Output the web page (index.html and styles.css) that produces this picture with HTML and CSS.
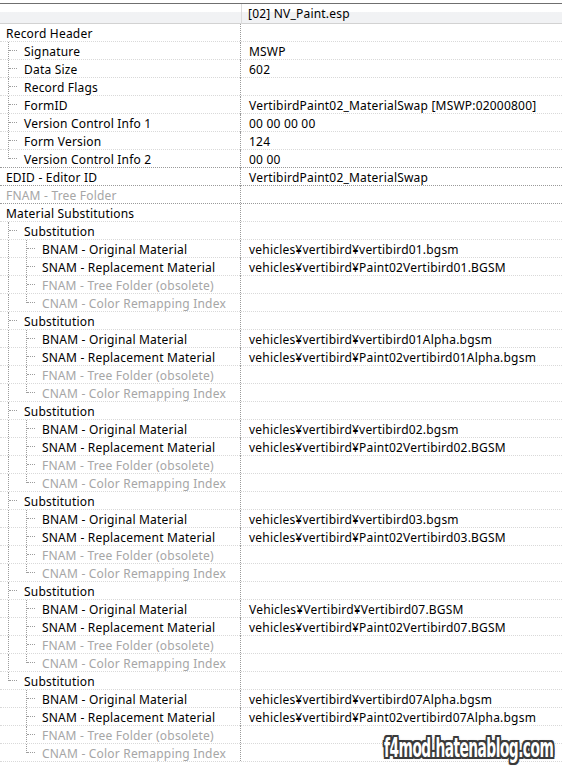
FILE: index.html
```html
<!DOCTYPE html>
<html lang="ja">
<head>
  <meta charset="UTF-8">
  <title>NV_Paint.esp - MSWP</title>
  <link rel="stylesheet" href="styles.css">
</head>
<body>
  <div class="view">
    <div class="head">
      <div class="hcell"></div>
      <div class="hcell file">[02] NV_Paint.esp</div>
    </div>

    <div class="tree">
      <div class="row"><div class="name"><span class="t">Record Header</span></div><div class="val"></div></div>
      <div class="row"><div class="name"><i class="g tee"></i><span class="t">Signature</span></div><div class="val">MSWP</div></div>
      <div class="row"><div class="name"><i class="g tee"></i><span class="t">Data Size</span></div><div class="val">602</div></div>
      <div class="row"><div class="name"><i class="g tee"></i><span class="t">Record Flags</span></div><div class="val"></div></div>
      <div class="row"><div class="name"><i class="g tee"></i><span class="t">FormID</span></div><div class="val">VertibirdPaint02_MaterialSwap [MSWP:02000800]</div></div>
      <div class="row"><div class="name"><i class="g tee"></i><span class="t">Version Control Info 1</span></div><div class="val">00 00 00 00</div></div>
      <div class="row"><div class="name"><i class="g tee"></i><span class="t">Form Version</span></div><div class="val">124</div></div>
      <div class="row top"><div class="name"><i class="g end"></i><span class="t">Version Control Info 2</span></div><div class="val">00 00</div></div>
      <div class="row top"><div class="name"><span class="t">EDID - Editor ID</span></div><div class="val">VertibirdPaint02_MaterialSwap</div></div>
      <div class="row top"><div class="name off"><span class="t">FNAM - Tree Folder</span></div><div class="val"></div></div>
      <div class="row"><div class="name"><span class="t">Material Substitutions</span></div><div class="val"></div></div>

      <!-- substitution 1 -->
      <div class="row"><div class="name"><i class="g tee"></i><span class="t">Substitution</span></div><div class="val"></div></div>
      <div class="row"><div class="name"><i class="g pipe"></i><i class="g tee"></i><span class="t">BNAM - Original Material</span></div><div class="val">vehicles¥vertibird¥vertibird01.bgsm</div></div>
      <div class="row"><div class="name"><i class="g pipe"></i><i class="g tee"></i><span class="t">SNAM - Replacement Material</span></div><div class="val">vehicles¥vertibird¥Paint02Vertibird01.BGSM</div></div>
      <div class="row"><div class="name off"><i class="g pipe"></i><i class="g tee"></i><span class="t">FNAM - Tree Folder (obsolete)</span></div><div class="val"></div></div>
      <div class="row"><div class="name off"><i class="g pipe"></i><i class="g end"></i><span class="t">CNAM - Color Remapping Index</span></div><div class="val"></div></div>

      <!-- substitution 2 -->
      <div class="row"><div class="name"><i class="g tee"></i><span class="t">Substitution</span></div><div class="val"></div></div>
      <div class="row"><div class="name"><i class="g pipe"></i><i class="g tee"></i><span class="t">BNAM - Original Material</span></div><div class="val">vehicles¥vertibird¥vertibird01Alpha.bgsm</div></div>
      <div class="row"><div class="name"><i class="g pipe"></i><i class="g tee"></i><span class="t">SNAM - Replacement Material</span></div><div class="val">vehicles¥vertibird¥Paint02vertibird01Alpha.bgsm</div></div>
      <div class="row"><div class="name off"><i class="g pipe"></i><i class="g tee"></i><span class="t">FNAM - Tree Folder (obsolete)</span></div><div class="val"></div></div>
      <div class="row"><div class="name off"><i class="g pipe"></i><i class="g end"></i><span class="t">CNAM - Color Remapping Index</span></div><div class="val"></div></div>

      <!-- substitution 3 -->
      <div class="row"><div class="name"><i class="g tee"></i><span class="t">Substitution</span></div><div class="val"></div></div>
      <div class="row"><div class="name"><i class="g pipe"></i><i class="g tee"></i><span class="t">BNAM - Original Material</span></div><div class="val">vehicles¥vertibird¥vertibird02.bgsm</div></div>
      <div class="row"><div class="name"><i class="g pipe"></i><i class="g tee"></i><span class="t">SNAM - Replacement Material</span></div><div class="val">vehicles¥vertibird¥Paint02Vertibird02.BGSM</div></div>
      <div class="row"><div class="name off"><i class="g pipe"></i><i class="g tee"></i><span class="t">FNAM - Tree Folder (obsolete)</span></div><div class="val"></div></div>
      <div class="row"><div class="name off"><i class="g pipe"></i><i class="g end"></i><span class="t">CNAM - Color Remapping Index</span></div><div class="val"></div></div>

      <!-- substitution 4 -->
      <div class="row"><div class="name"><i class="g tee"></i><span class="t">Substitution</span></div><div class="val"></div></div>
      <div class="row"><div class="name"><i class="g pipe"></i><i class="g tee"></i><span class="t">BNAM - Original Material</span></div><div class="val">vehicles¥vertibird¥vertibird03.bgsm</div></div>
      <div class="row"><div class="name"><i class="g pipe"></i><i class="g tee"></i><span class="t">SNAM - Replacement Material</span></div><div class="val">vehicles¥vertibird¥Paint02Vertibird03.BGSM</div></div>
      <div class="row"><div class="name off"><i class="g pipe"></i><i class="g tee"></i><span class="t">FNAM - Tree Folder (obsolete)</span></div><div class="val"></div></div>
      <div class="row"><div class="name off"><i class="g pipe"></i><i class="g end"></i><span class="t">CNAM - Color Remapping Index</span></div><div class="val"></div></div>

      <!-- substitution 5 -->
      <div class="row"><div class="name"><i class="g tee"></i><span class="t">Substitution</span></div><div class="val"></div></div>
      <div class="row"><div class="name"><i class="g pipe"></i><i class="g tee"></i><span class="t">BNAM - Original Material</span></div><div class="val">Vehicles¥Vertibird¥Vertibird07.BGSM</div></div>
      <div class="row"><div class="name"><i class="g pipe"></i><i class="g tee"></i><span class="t">SNAM - Replacement Material</span></div><div class="val">vehicles¥vertibird¥Paint02Vertibird07.BGSM</div></div>
      <div class="row"><div class="name off"><i class="g pipe"></i><i class="g tee"></i><span class="t">FNAM - Tree Folder (obsolete)</span></div><div class="val"></div></div>
      <div class="row"><div class="name off"><i class="g pipe"></i><i class="g end"></i><span class="t">CNAM - Color Remapping Index</span></div><div class="val"></div></div>

      <!-- substitution 6 (last) -->
      <div class="row"><div class="name"><i class="g end"></i><span class="t">Substitution</span></div><div class="val"></div></div>
      <div class="row"><div class="name"><i class="g"></i><i class="g tee"></i><span class="t">BNAM - Original Material</span></div><div class="val">vehicles¥vertibird¥vertibird07Alpha.bgsm</div></div>
      <div class="row"><div class="name"><i class="g"></i><i class="g tee"></i><span class="t">SNAM - Replacement Material</span></div><div class="val">vehicles¥vertibird¥Paint02vertibird07Alpha.bgsm</div></div>
      <div class="row"><div class="name off"><i class="g"></i><i class="g tee"></i><span class="t">FNAM - Tree Folder (obsolete)</span></div><div class="val"></div></div>
      <div class="row"><div class="name off"><i class="g"></i><i class="g end"></i><span class="t">CNAM - Color Remapping Index</span></div><div class="val"></div></div>
    </div>

    <div class="stamp">f4mod.hatenablog.com</div>
  </div>
</body>
</html>
```

FILE: styles.css
```css
html, body {
  margin: 0;
  background: #fff;
}
body {
  font-family: "Noto Sans", "Noto Sans CJK JP", sans-serif;
  font-size: 12px;
  letter-spacing: 0.2px;
  color: #000;
}
.view {
  position: relative;
  width: 562px;
  height: 766px;
  overflow: hidden;
  padding-top: 3px;
  box-sizing: border-box;
}

/* column header */
.head {
  display: grid;
  grid-template-columns: 242px 1fr;
  height: 21px;
  box-sizing: border-box;
  border-top: 1px solid #6f6f6f;
  border-bottom: 1px solid #d2d2d2;
  background: linear-gradient(#ffffff 0, #ffffff 40%, #f1f2f4 45%, #f1f2f4 100%);
}
.hcell {
  border-right: 1px solid #dcdcdc;
  line-height: 20px;
}
.hcell.file {
  border-right: 0;
  padding-left: 6px;
}

/* tree rows */
.row {
  display: grid;
  grid-template-columns: 241px 1fr;
  height: 18px;
  box-sizing: border-box;
  border-bottom: 1px dotted #d9d9d9;
}
.row.top {
  border-bottom-color: #9a9a9a;
}
.name {
  display: flex;
  border-right: 1px dotted #9a9a9a;
  white-space: nowrap;
  overflow: hidden;
}
.name.off {
  color: #a6a6a6;
}
.t {
  padding-left: 6px;
  padding-top: 1px;
  line-height: 17px;
}
.val {
  padding-left: 8px;
  padding-top: 1px;
  line-height: 17px;
  white-space: nowrap;
}

/* tree guide segments */
.g {
  position: relative;
  flex: none;
  width: 18px;
}
.g.pipe::before,
.g.tee::before,
.g.end::before {
  content: "";
  position: absolute;
  left: 8px;
  top: 0;
  bottom: -1px;
  border-left: 1px dotted #9c9c9c;
}
.g.end::before {
  bottom: auto;
  height: 9px;
}
.g.tee::after,
.g.end::after {
  content: "";
  position: absolute;
  left: 9px;
  top: 8px;
  width: 8px;
  border-top: 1px dotted #9c9c9c;
}

/* blog watermark */
.stamp {
  position: absolute;
  right: 9px;
  bottom: 5px;
  font-family: "DejaVu Sans", sans-serif;
  font-weight: bold;
  font-size: 26px;
  line-height: 26px;
  letter-spacing: -1px;
  color: #fff;
  transform: scaleX(0.53);
  transform-origin: right bottom;
  text-shadow:
    3px 0 0 #3a3a3a, -3px 0 0 #3a3a3a, 0 2px 0 #3a3a3a, 0 -2px 0 #3a3a3a,
    3px 2px 0 #3a3a3a, -3px -2px 0 #3a3a3a, 3px -2px 0 #3a3a3a, -3px 2px 0 #3a3a3a,
    0 0 5px #8a8a8a;
}
```
